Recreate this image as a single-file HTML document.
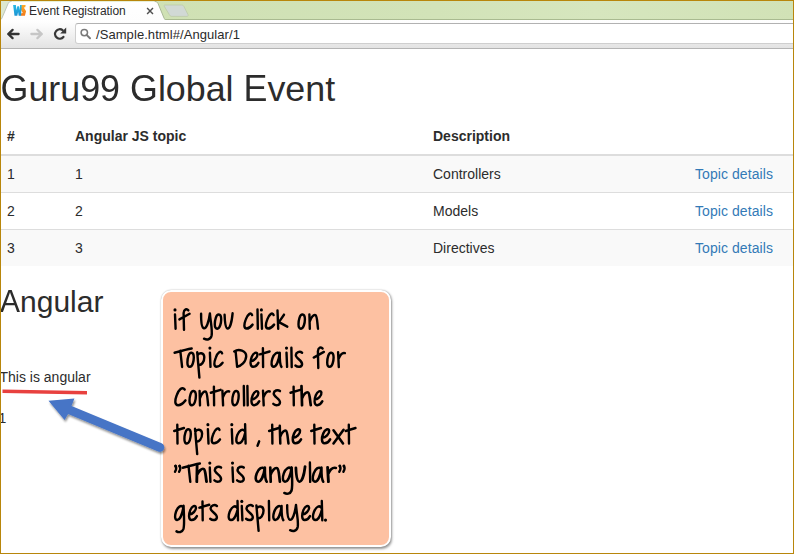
<!DOCTYPE html>
<html>
<head>
<meta charset="utf-8">
<title>Event Registration</title>
<style>
html,body{margin:0;padding:0;}
body{width:794px;height:554px;overflow:hidden;background:#fff;font-family:"Liberation Sans",sans-serif;color:#333;position:relative;}
#frame{position:absolute;left:0;top:0;width:792px;height:552px;border:1px solid #b8860b;overflow:hidden;background:#fff;}
#tabstrip{position:absolute;left:0;top:0;width:792px;height:18px;background:linear-gradient(90deg,#cee0b2,#d2e3b8 55%,#d6e6be 75%,#d1e2b6);border-bottom:1px solid #a9ba90;}
#toolbar{position:absolute;left:0;top:19px;width:792px;height:28px;background:linear-gradient(#ffffff,#fbfbfb 20%,#efefef 60%,#e3e3e3);border-bottom:1px solid #b4b4b4;}
#urlbox{position:absolute;left:74px;top:3px;width:720px;height:19px;background:#fff;border:1px solid #cfcfcf;border-top-color:#b2b2b2;border-radius:3px;}
#url{position:absolute;left:95px;top:25.5px;font-size:13px;letter-spacing:0.07px;color:#2b2b2b;line-height:16px;}
#tabtitle{position:absolute;left:28px;top:2.5px;font-size:12px;letter-spacing:-0.08px;color:#2b2b2b;line-height:14px;}
h1{position:absolute;left:-0.5px;top:67.8px;margin:0;font-size:35.85px;font-weight:normal;line-height:40px;color:#2c2c2c;white-space:nowrap;}
h2{position:absolute;left:-1px;top:283.5px;margin:0;font-size:30px;font-weight:normal;line-height:33px;color:#2c2c2c;}
table{position:absolute;left:-2px;top:117px;width:794px;table-layout:fixed;border-collapse:collapse;font-size:14px;line-height:20px;color:#2c2c2c;}
th{font-weight:bold;text-align:left;padding:7.5px 8px 8.5px;border-bottom:2px solid #ddd;}
td{padding:7.5px 8px 8.5px;border-top:1px solid #ddd;}
tr.odd td{background:#f9f9f9;}
td a{color:#337ab7;text-decoration:none;letter-spacing:0.07px;}
.p{position:absolute;left:-1px;font-size:14px;line-height:20px;color:#2c2c2c;}
#callout{position:absolute;left:160px;top:289px;width:226px;height:252.5px;background:#fdc1a2;border:2px solid #fff;border-radius:10px;box-shadow:0 0 1.2px rgba(0,0,0,.28),1px 1.5px 2.5px rgba(0,0,0,.4);}
h1 .cp{display:inline-block;transform-origin:0 32.4px;transform:scaleY(1.03);}
h2 .cp{display:inline-block;transform-origin:0 26.9px;transform:scaleY(1.02);}
</style>
</head>
<body>
<div id="frame">
  <div id="tabstrip"></div>
  <svg style="position:absolute;left:0;top:0" width="260" height="20" viewBox="0 0 260 20">
    <defs><linearGradient id="tg" x1="0" y1="0" x2="0" y2="1"><stop offset="0" stop-color="#ffffff"/><stop offset="1" stop-color="#fdfdfd"/></linearGradient></defs>
    <path d="M0 0 L12 0 L0 20 Z" fill="#dde8cf"/>
    <path d="M-1.5 19.5 C0 18.8 0.7 17.8 1.4 16 L7 2.8 C7.7 1.2 8.5 0.5 10.5 0.5 L153.7 0.5 C155.7 0.5 156.5 1.2 157.2 2.8 L162.6 16 C163.3 17.8 164 18.8 165.5 19.5 Z" fill="url(#tg)"/>
    <path d="M-1.5 19.5 C0 18.8 0.7 17.8 1.4 16 L7 2.8 C7.7 1.2 8.5 0.5 10.5 0.5" fill="none" stroke="#b9bfb4" stroke-width="0.9"/>
    <path d="M153.7 0.5 C155.7 0.5 156.5 1.2 157.2 2.8 L162.6 16 C163.3 17.8 164 18.8 165.5 19.5" fill="none" stroke="#a9b896" stroke-width="1"/>
    <path d="M164 4 L180.5 4 C182 4 182.6 4.8 183.2 6 L187 13.6 C187.4 14.6 187 15.4 186 15.4 L171 15.4 C169.5 15.4 168.8 14.6 168.2 13.4 L163.2 5.2 C162.9 4.5 163.2 4 164 4 Z" fill="#d1d9d5" stroke="#bccaa8" stroke-width="0.8"/>
    <path d="M146.1 7 L152 12.9 M152 7 L146.1 12.9" stroke="#505050" stroke-width="1.45" fill="none"/>
  </svg>
  <div id="toolbar"><div id="urlbox"></div></div>
  <svg style="position:absolute;left:0;top:19px" width="100" height="28" viewBox="0 0 100 28">
    <path d="M17.6 14 L8 14 M11.6 9.9 L7.2 14 L11.6 18.1" stroke="#333" stroke-width="2.3" fill="none" stroke-linecap="round" stroke-linejoin="round"/>
    <path d="M30.4 14 L40 14 M36.4 9.9 L40.8 14 L36.4 18.1" stroke="#c6c6c6" stroke-width="2.3" fill="none" stroke-linecap="round" stroke-linejoin="round"/>
    <path d="M61.6 10.2 A4.7 4.7 0 1 0 62.4 17" stroke="#383838" stroke-width="2.3" fill="none" stroke-linecap="round"/>
    <path d="M65.2 7.6 L65.2 13.6 L59.2 13.6 Z" fill="#383838"/>
    <circle cx="83.3" cy="12.6" r="3.2" stroke="#7a7a7a" stroke-width="1.5" fill="none"/>
    <path d="M85.8 15.1 L89 18.3" stroke="#7a7a7a" stroke-width="2" stroke-linecap="round"/>
  </svg>
  <svg style="position:absolute;left:11px;top:3px" width="16" height="14" viewBox="12 4 16 14">
    <defs><linearGradient id="fb" x1="0" y1="0" x2="0" y2="1"><stop offset="0" stop-color="#27b9e6"/><stop offset="1" stop-color="#1b93d2"/></linearGradient>
    <linearGradient id="fo" x1="0" y1="0" x2="0" y2="1"><stop offset="0" stop-color="#fbab28"/><stop offset="1" stop-color="#f27a1c"/></linearGradient></defs>
    <path d="M21.3 5.1 L25.6 5.1 L25.3 7.3 L23.8 7.4 L26.1 11.3 L24.9 15.7 L20.6 15.7 L21.2 13.3 L22.8 13.1 L20.8 9.4 Z" fill="url(#fo)"/>
    <path d="M13.1 5 L15.9 5 L16.5 10.2 L17.3 6.2 L19 6.2 L19.6 10.2 L20 5 L21.7 5 L21.1 15.8 L18.7 15.8 L18.1 12 L17.3 15.8 L14.5 15.8 Z" fill="url(#fb)"/>
  </svg>
  <div id="tabtitle">Event Registration</div>
  <div id="url">/Sample.html#/Angular/1</div>

  <h1><span class="cp">G</span>uru<span class="cp">99</span> <span class="cp">G</span>lobal <span class="cp">E</span>vent</h1>
  <table>
    <tr><th style="width:52px">#</th><th style="width:342px">Angular JS topic</th><th style="width:246px">Description</th><th></th></tr>
    <tr class="odd"><td>1</td><td>1</td><td>Controllers</td><td><a>Topic details</a></td></tr>
    <tr><td>2</td><td>2</td><td>Models</td><td><a>Topic details</a></td></tr>
    <tr class="odd"><td>3</td><td>3</td><td>Directives</td><td><a>Topic details</a></td></tr>
  </table>
  <h2><span class="cp">A</span>ngular</h2>
  <div class="p" style="top:366px;left:-1.5px">This is angular</div>
  <div class="p" style="top:406.5px;left:-2.5px">1</div>

  <div id="callout"></div>
  <svg style="position:absolute;left:0;top:380px" width="200" height="90" viewBox="1 381 200 90">
    <defs><filter id="sh" x="-10%" y="-10%" width="120%" height="130%"><feGaussianBlur in="SourceAlpha" stdDeviation="1"/><feOffset dx="0.5" dy="1.5"/><feComponentTransfer><feFuncA type="linear" slope="0.45"/></feComponentTransfer><feMerge><feMergeNode/><feMergeNode in="SourceGraphic"/></feMerge></filter></defs>
    <path d="M2.5 391.2 L87 392.7" stroke="#e8413f" stroke-width="3.5" fill="none"/>
    <g filter="url(#sh)">
    <path d="M48.5 400.8 L74.4 398.5 L71.5 405.9 L161.6 443.3 A4.4 4.4 0 0 1 158.2 451.5 L68.1 414.1 L64.6 420 Z" fill="#4674c6"/>
    </g>
  </svg>





<!--HW-->
<svg id="hw" style="position:absolute;left:-1px;top:-1px" width="794" height="554" viewBox="0 0 794 554">
<g fill="none" stroke="#000" stroke-width="2.4" stroke-linecap="round" stroke-linejoin="round">
<g transform="translate(173.5 330.0) scale(1 1.035)"><path d="M1.5,-15 L2.1,-1.3"/><circle cx="1.5" cy="-19.4" r="1.55" fill="#000" stroke="none"/></g>
<g transform="translate(177.7 330.0) scale(1 1.035)"><path d="M10.6,-19 C9.2,-20.8 6.2,-20.2 5.9,-16.4 L6.3,-0.3 M1.7,-10.3 L11.9,-15.7"/></g>
<g transform="translate(199.7 330.0) scale(1 1.035)"><path d="M1.4,-15.7 C1.3,-8 1.8,-2.2 4.2,-1.6 C6.6,-1.2 9,-7 10.2,-16 C10.8,-8 12.9,0 11.9,5.4 C11,9.4 7.2,9.8 4.3,8.4"/></g>
<g transform="translate(213.5 330.0) scale(1 1.035)"><path d="M5.3,-15 C2.6,-15.2 1.3,-9.4 1.3,-5.6 C1.3,-2.5 2.3,-1.2 3.8,-1.3 C6.4,-1.5 7.7,-6.8 7.7,-10.4 C7.7,-13.6 6.8,-14.9 5.3,-15 Z"/></g>
<g transform="translate(223.3 330.0) scale(1 1.035)"><path d="M1.3,-14.8 C1.5,-8 2.4,-1.6 4.4,-1.4 C6.6,-1.3 8.5,-8 9.3,-16.1"/></g>
<g transform="translate(242.8 330.0) scale(1 1.035)"><path d="M9.3,-14.4 C8.2,-17.6 4.8,-15.2 2.9,-10 C1,-5.2 0.9,-1.5 3.8,-1.4 C6.2,-1.4 8.2,-3.2 9.8,-5.2"/></g>
<g transform="translate(255.9 330.0) scale(1 1.035)"><path d="M1.6,-19.8 L1.9,-1.2"/></g>
<g transform="translate(259.9 330.0) scale(1 1.035)"><path d="M1.5,-15 L2.1,-1.3"/><circle cx="1.5" cy="-19.4" r="1.55" fill="#000" stroke="none"/></g>
<g transform="translate(264.3 330.0) scale(1 1.035)"><path d="M9.3,-14.4 C8.2,-17.6 4.8,-15.2 2.9,-10 C1,-5.2 0.9,-1.5 3.8,-1.4 C6.2,-1.4 8.2,-3.2 9.8,-5.2"/></g>
<g transform="translate(276.0 330.0) scale(1 1.035)"><path d="M1.5,-18.8 L2.2,-1.2 M8,-14.8 L2.9,-7.6 L11.3,-3.2"/></g>
<g transform="translate(297.2 330.0) scale(1 1.035)"><path d="M5.3,-15 C2.6,-15.2 1.3,-9.4 1.3,-5.6 C1.3,-2.5 2.3,-1.2 3.8,-1.3 C6.4,-1.5 7.7,-6.8 7.7,-10.4 C7.7,-13.6 6.8,-14.9 5.3,-15 Z"/></g>
<g transform="translate(308.0 330.0) scale(1 1.035)"><path d="M1.4,-15 L1.8,-1.2 M1.7,-8 C3,-12.2 5.5,-15.2 7.5,-14.4 C9.3,-13.4 9.3,-6 10,-1.3"/></g>
<g transform="translate(173.7 368.2) scale(1 1.035)"><path d="M0.9,-14.9 C5,-16 12,-18 18,-19 M6.6,-16.8 L8.4,-1.2"/></g>
<g transform="translate(186.1 368.2) scale(1 1.035)"><path d="M5.3,-15 C2.6,-15.2 1.3,-9.4 1.3,-5.6 C1.3,-2.5 2.3,-1.2 3.8,-1.3 C6.4,-1.5 7.7,-6.8 7.7,-10.4 C7.7,-13.6 6.8,-14.9 5.3,-15 Z"/></g>
<g transform="translate(195.8 368.2) scale(1 1.035)"><path d="M1.4,-15.4 L3.6,9 M1.7,-12.4 C3,-15.2 8.2,-15.6 8.5,-10.8 C8.7,-6 5.4,-2.4 2.6,-3.2"/></g>
<g transform="translate(208.4 368.2) scale(1 1.035)"><path d="M1.5,-15 L2.1,-1.3"/><circle cx="1.5" cy="-19.4" r="1.55" fill="#000" stroke="none"/></g>
<g transform="translate(212.8 368.2) scale(1 1.035)"><path d="M9.3,-14.4 C8.2,-17.6 4.8,-15.2 2.9,-10 C1,-5.2 0.9,-1.5 3.8,-1.4 C6.2,-1.4 8.2,-3.2 9.8,-5.2"/></g>
<g transform="translate(232.9 368.2) scale(1 1.035)"><path d="M2.7,-16.6 L4.2,-1.4 M1.3,-16.2 C6,-19.2 13.4,-16.8 13.3,-11.5 C13.1,-6 8,-2.2 4.2,-1.4"/></g>
<g transform="translate(249.0 368.2) scale(1 1.035)"><path d="M1.9,-6.8 C5,-7.2 8.9,-10.5 8.4,-13.6 C7.9,-16 4.5,-15.2 2.8,-11 C1,-6.8 1,-1.5 4,-1.4 C6.5,-1.3 8.2,-3 9.4,-5.2"/></g>
<g transform="translate(258.6 368.2) scale(1 1.035)"><path d="M4.3,-19.3 L4.5,-1.2 M1.2,-13.4 L11,-16.2"/></g>
<g transform="translate(270.1 368.2) scale(1 1.035)"><path d="M9.4,-13.6 C7.6,-16.6 4,-14.2 2.3,-9.4 C0.8,-5 1.2,-1.5 3.5,-1.4 C6,-1.4 8.6,-6.4 9.7,-15 C9.6,-8 10,-3 11.4,-1.3"/></g>
<g transform="translate(285.0 368.2) scale(1 1.035)"><path d="M1.5,-15 L2.1,-1.3"/><circle cx="1.5" cy="-19.4" r="1.55" fill="#000" stroke="none"/></g>
<g transform="translate(289.8 368.2) scale(1 1.035)"><path d="M1.6,-19.8 L1.9,-1.2"/></g>
<g transform="translate(294.1 368.2) scale(1 1.035)"><path d="M8,-15 C5.6,-16.8 1.9,-15.4 1.7,-12.6 C1.6,-9.5 8.2,-7.6 8,-4 C7.8,-0.9 3.6,-0.7 1.3,-2.6"/></g>
<g transform="translate(312.0 368.2) scale(1 1.035)"><path d="M10.6,-19 C9.2,-20.8 6.2,-20.2 5.9,-16.4 L6.3,-0.3 M1.7,-10.3 L11.9,-15.7"/></g>
<g transform="translate(325.9 368.2) scale(1 1.035)"><path d="M5.3,-15 C2.6,-15.2 1.3,-9.4 1.3,-5.6 C1.3,-2.5 2.3,-1.2 3.8,-1.3 C6.4,-1.5 7.7,-6.8 7.7,-10.4 C7.7,-13.6 6.8,-14.9 5.3,-15 Z"/></g>
<g transform="translate(336.6 368.2) scale(1 1.035)"><path d="M1.5,-15.3 L2.2,-1.2 M2,-9 C3.5,-12.8 6,-15.2 8.3,-14.6"/></g>
<g transform="translate(173.7 406.6) scale(1 1.035)"><path d="M11,-16.6 C8.5,-19.8 5,-16.4 3,-11 C1,-6 0.8,-1.5 4.5,-1.4 C7.5,-1.4 9.8,-3.6 11.8,-6"/></g>
<g transform="translate(188.2 406.6) scale(1 1.035)"><path d="M5.3,-15 C2.6,-15.2 1.3,-9.4 1.3,-5.6 C1.3,-2.5 2.3,-1.2 3.8,-1.3 C6.4,-1.5 7.7,-6.8 7.7,-10.4 C7.7,-13.6 6.8,-14.9 5.3,-15 Z"/></g>
<g transform="translate(198.2 406.6) scale(1 1.035)"><path d="M1.4,-15 L1.8,-1.2 M1.7,-8 C3,-12.2 5.5,-15.2 7.5,-14.4 C9.3,-13.4 9.3,-6 10,-1.3"/></g>
<g transform="translate(209.6 406.6) scale(1 1.035)"><path d="M4.3,-19.3 L4.5,-1.2 M1.2,-13.4 L11,-16.2"/></g>
<g transform="translate(220.9 406.6) scale(1 1.035)"><path d="M1.5,-15.3 L2.2,-1.2 M2,-9 C3.5,-12.8 6,-15.2 8.3,-14.6"/></g>
<g transform="translate(231.0 406.6) scale(1 1.035)"><path d="M5.3,-15 C2.6,-15.2 1.3,-9.4 1.3,-5.6 C1.3,-2.5 2.3,-1.2 3.8,-1.3 C6.4,-1.5 7.7,-6.8 7.7,-10.4 C7.7,-13.6 6.8,-14.9 5.3,-15 Z"/></g>
<g transform="translate(242.2 406.6) scale(1 1.035)"><path d="M1.6,-19.8 L1.9,-1.2"/></g>
<g transform="translate(245.8 406.6) scale(1 1.035)"><path d="M1.6,-19.8 L1.9,-1.2"/></g>
<g transform="translate(249.9 406.6) scale(1 1.035)"><path d="M1.9,-6.8 C5,-7.2 8.9,-10.5 8.4,-13.6 C7.9,-16 4.5,-15.2 2.8,-11 C1,-6.8 1,-1.5 4,-1.4 C6.5,-1.3 8.2,-3 9.4,-5.2"/></g>
<g transform="translate(261.5 406.6) scale(1 1.035)"><path d="M1.5,-15.3 L2.2,-1.2 M2,-9 C3.5,-12.8 6,-15.2 8.3,-14.6"/></g>
<g transform="translate(272.0 406.6) scale(1 1.035)"><path d="M8,-15 C5.6,-16.8 1.9,-15.4 1.7,-12.6 C1.6,-9.5 8.2,-7.6 8,-4 C7.8,-0.9 3.6,-0.7 1.3,-2.6"/></g>
<g transform="translate(289.3 406.6) scale(1 1.035)"><path d="M4.3,-19.3 L4.5,-1.2 M1.2,-13.4 L11,-16.2"/></g>
<g transform="translate(299.8 406.6) scale(1.12 1.035)"><path d="M1.5,-20 L2,-1.2 M2,-8 C3.5,-12 6,-14.6 7.5,-13.6 C9,-12.5 9,-6 9.8,-1.3"/></g>
<g transform="translate(313.0 406.6) scale(1 1.035)"><path d="M1.9,-6.8 C5,-7.2 8.9,-10.5 8.4,-13.6 C7.9,-16 4.5,-15.2 2.8,-11 C1,-6.8 1,-1.5 4,-1.4 C6.5,-1.3 8.2,-3 9.4,-5.2"/></g>
<g transform="translate(173.0 444.8) scale(1 1.035)"><path d="M4.3,-19.3 L4.5,-1.2 M1.2,-13.4 L11,-16.2"/></g>
<g transform="translate(183.1 444.8) scale(1 1.035)"><path d="M5.3,-15 C2.6,-15.2 1.3,-9.4 1.3,-5.6 C1.3,-2.5 2.3,-1.2 3.8,-1.3 C6.4,-1.5 7.7,-6.8 7.7,-10.4 C7.7,-13.6 6.8,-14.9 5.3,-15 Z"/></g>
<g transform="translate(193.6 444.8) scale(1 1.035)"><path d="M1.4,-15.4 L3.6,9 M1.7,-12.4 C3,-15.2 8.2,-15.6 8.5,-10.8 C8.7,-6 5.4,-2.4 2.6,-3.2"/></g>
<g transform="translate(206.4 444.8) scale(1 1.035)"><path d="M1.5,-15 L2.1,-1.3"/><circle cx="1.5" cy="-19.4" r="1.55" fill="#000" stroke="none"/></g>
<g transform="translate(210.2 444.8) scale(1 1.035)"><path d="M9.3,-14.4 C8.2,-17.6 4.8,-15.2 2.9,-10 C1,-5.2 0.9,-1.5 3.8,-1.4 C6.2,-1.4 8.2,-3.2 9.8,-5.2"/></g>
<g transform="translate(230.3 444.8) scale(1 1.035)"><path d="M1.5,-15 L2.1,-1.3"/><circle cx="1.5" cy="-19.4" r="1.55" fill="#000" stroke="none"/></g>
<g transform="translate(234.8 444.8) scale(1 1.035)"><path d="M10.3,-19.8 L10.8,-1.2 M10.3,-12.8 C8,-16.4 4.5,-14.2 2.5,-9.4 C0.8,-5 1.2,-1.5 3.8,-1.4 C6.5,-1.4 9.1,-6.2 10.4,-11.5"/></g>
<g transform="translate(256.0 444.8) scale(1 1.035)"><path d="M3.2,-3.4 L1.5,0.9"/></g>
<g transform="translate(267.9 444.8) scale(1 1.035)"><path d="M4.3,-19.3 L4.5,-1.2 M1.2,-13.4 L11,-16.2"/></g>
<g transform="translate(278.2 444.8) scale(1.05 1.035)"><path d="M1.5,-18.3 L2,-1.2 M2,-8 C3.5,-12 6,-14.6 7.5,-13.6 C9,-12.5 9,-6 9.8,-1.3"/></g>
<g transform="translate(291.1 444.8) scale(1.06 1.035)"><path d="M1.9,-6.8 C5,-7.2 8.9,-10.5 8.4,-13.6 C7.9,-16 4.5,-15.2 2.8,-11 C1,-6.8 1,-1.5 4,-1.4 C6.5,-1.3 8.2,-3 9.4,-5.2"/></g>
<g transform="translate(310.0 444.8) scale(1 1.035)"><path d="M4.3,-19.3 L4.5,-1.2 M1.2,-13.4 L11,-16.2"/></g>
<g transform="translate(320.3 444.8) scale(1.05 1.035)"><path d="M1.9,-6.8 C5,-7.2 8.9,-10.5 8.4,-13.6 C7.9,-16 4.5,-15.2 2.8,-11 C1,-6.8 1,-1.5 4,-1.4 C6.5,-1.3 8.2,-3 9.4,-5.2"/></g>
<g transform="translate(331.9 444.8) scale(1.06 1.035)"><path d="M1.5,-14 L10.5,-1.3 M11,-14.5 L1.5,-1.3"/></g>
<g transform="translate(344.5 444.8) scale(1 1.035)"><path d="M4.3,-19.3 L4.5,-1.2 M1.2,-13.4 L11,-16.2"/></g>
<g transform="translate(173.7 483.1) scale(1 1.035)"><path d="M1.9,-16.6 C2.9,-14.6 2.5,-12.6 1.3,-11 M6,-16.6 C7,-14.6 6.6,-12.6 5.4,-11"/><circle cx="1.7" cy="-16.5" r="1.35" fill="#000" stroke="none"/><circle cx="5.8" cy="-16.5" r="1.35" fill="#000" stroke="none"/></g>
<g transform="translate(181.9 483.1) scale(1 1.035)"><path d="M0.9,-14.9 C5,-16 12,-18 18,-19 M6.6,-16.8 L8.4,-1.2"/></g>
<g transform="translate(195.0 483.1) scale(1.18 1.035)"><path d="M1.8,-17.6 L1.5,-1.2 M1.7,-8 C3.2,-12 6,-14.6 7.5,-13.6 C9,-12.5 9,-6 9.8,-1.3"/></g>
<g transform="translate(208.3 483.1) scale(1 1.035)"><path d="M1.5,-15 L2.1,-1.3"/><circle cx="1.5" cy="-19.4" r="1.55" fill="#000" stroke="none"/></g>
<g transform="translate(213.1 483.1) scale(1 1.035)"><path d="M8,-15 C5.6,-16.8 1.9,-15.4 1.7,-12.6 C1.6,-9.5 8.2,-7.6 8,-4 C7.8,-0.9 3.6,-0.7 1.3,-2.6"/></g>
<g transform="translate(231.0 483.1) scale(1 1.035)"><path d="M1.5,-15 L2.1,-1.3"/><circle cx="1.5" cy="-19.4" r="1.55" fill="#000" stroke="none"/></g>
<g transform="translate(235.8 483.1) scale(1 1.035)"><path d="M8,-15 C5.6,-16.8 1.9,-15.4 1.7,-12.6 C1.6,-9.5 8.2,-7.6 8,-4 C7.8,-0.9 3.6,-0.7 1.3,-2.6"/></g>
<g transform="translate(254.2 483.1) scale(1.1 1.035)"><path d="M9.4,-13.6 C7.6,-16.6 4,-14.2 2.3,-9.4 C0.8,-5 1.2,-1.5 3.5,-1.4 C6,-1.4 8.6,-6.4 9.7,-15 C9.6,-8 10,-3 11.4,-1.3"/></g>
<g transform="translate(268.7 483.1) scale(1.12 1.035)"><path d="M1.4,-15 L1.8,-1.2 M1.7,-8 C3,-12.2 5.5,-15.2 7.5,-14.4 C9.3,-13.4 9.3,-6 10,-1.3"/></g>
<g transform="translate(281.4 483.1) scale(1.04 1.035)"><path d="M9.5,-13.6 C7.5,-16.5 4,-14.2 2.3,-9.4 C0.8,-5 1.2,-1.5 3.5,-1.4 C6,-1.4 8.6,-6.4 9.9,-15.2 C10.1,-6 11.1,3 9.7,7.4 C8.5,10.6 5,10.8 2.8,9.5"/></g>
<g transform="translate(294.4 483.1) scale(1.15 1.035)"><path d="M1.3,-14.8 C1.5,-8 2.4,-1.6 4.4,-1.4 C6.6,-1.3 8.5,-8 9.3,-16.1"/></g>
<g transform="translate(308.3 483.1) scale(1 1.035)"><path d="M1.6,-19.8 L1.9,-1.2"/></g>
<g transform="translate(311.3 483.1) scale(1.05 1.035)"><path d="M9.4,-13.6 C7.6,-16.6 4,-14.2 2.3,-9.4 C0.8,-5 1.2,-1.5 3.5,-1.4 C6,-1.4 8.6,-6.4 9.7,-15 C9.6,-8 10,-3 11.4,-1.3"/></g>
<g transform="translate(325.8 483.1) scale(1.2 1.035)"><path d="M1.5,-15.3 L2.2,-1.2 M2,-9 C3.5,-12.8 6,-15.2 8.3,-14.6"/></g>
<g transform="translate(338.0 483.1) scale(1 1.035)"><path d="M1.9,-16.6 C2.9,-14.6 2.5,-12.6 1.3,-11 M6,-16.6 C7,-14.6 6.6,-12.6 5.4,-11"/><circle cx="1.7" cy="-16.5" r="1.35" fill="#000" stroke="none"/><circle cx="5.8" cy="-16.5" r="1.35" fill="#000" stroke="none"/></g>
<g transform="translate(173.7 521.5) scale(1 1.035)"><path d="M9.5,-13.6 C7.5,-16.5 4,-14.2 2.3,-9.4 C0.8,-5 1.2,-1.5 3.5,-1.4 C6,-1.4 8.6,-6.4 9.9,-15.2 C10.1,-6 11.1,3 9.7,7.4 C8.5,10.6 5,10.8 2.8,9.5"/></g>
<g transform="translate(187.5 521.5) scale(1 1.035)"><path d="M1.9,-6.8 C5,-7.2 8.9,-10.5 8.4,-13.6 C7.9,-16 4.5,-15.2 2.8,-11 C1,-6.8 1,-1.5 4,-1.4 C6.5,-1.3 8.2,-3 9.4,-5.2"/></g>
<g transform="translate(198.2 521.5) scale(1 1.035)"><path d="M4.3,-19.3 L4.5,-1.2 M1.2,-13.4 L11,-16.2"/></g>
<g transform="translate(208.9 521.5) scale(1 1.035)"><path d="M8,-15 C5.6,-16.8 1.9,-15.4 1.7,-12.6 C1.6,-9.5 8.2,-7.6 8,-4 C7.8,-0.9 3.6,-0.7 1.3,-2.6"/></g>
<g transform="translate(227.2 521.5) scale(1 1.035)"><path d="M10.3,-19.8 L10.8,-1.2 M10.3,-12.8 C8,-16.4 4.5,-14.2 2.5,-9.4 C0.8,-5 1.2,-1.5 3.8,-1.4 C6.5,-1.4 9.1,-6.2 10.4,-11.5"/></g>
<g transform="translate(240.3 521.5) scale(1 1.035)"><path d="M1.5,-15 L2.1,-1.3"/><circle cx="1.5" cy="-19.4" r="1.55" fill="#000" stroke="none"/></g>
<g transform="translate(244.8 521.5) scale(1 1.035)"><path d="M8,-15 C5.6,-16.8 1.9,-15.4 1.7,-12.6 C1.6,-9.5 8.2,-7.6 8,-4 C7.8,-0.9 3.6,-0.7 1.3,-2.6"/></g>
<g transform="translate(255.0 521.5) scale(1 1.035)"><path d="M1.4,-15.4 L3.6,9 M1.7,-12.4 C3,-15.2 8.2,-15.6 8.5,-10.8 C8.7,-6 5.4,-2.4 2.6,-3.2"/></g>
<g transform="translate(267.3 521.5) scale(1 1.035)"><path d="M1.6,-19.8 L1.9,-1.2"/></g>
<g transform="translate(271.9 521.5) scale(1 1.035)"><path d="M9.4,-13.6 C7.6,-16.6 4,-14.2 2.3,-9.4 C0.8,-5 1.2,-1.5 3.5,-1.4 C6,-1.4 8.6,-6.4 9.7,-15 C9.6,-8 10,-3 11.4,-1.3"/></g>
<g transform="translate(285.8 521.5) scale(1 1.035)"><path d="M1.4,-15.7 C1.3,-8 1.8,-2.2 4.2,-1.6 C6.6,-1.2 9,-7 10.2,-16 C10.8,-8 12.9,0 11.9,5.4 C11,9.4 7.2,9.8 4.3,8.4"/></g>
<g transform="translate(300.6 521.5) scale(1 1.035)"><path d="M1.9,-6.8 C5,-7.2 8.9,-10.5 8.4,-13.6 C7.9,-16 4.5,-15.2 2.8,-11 C1,-6.8 1,-1.5 4,-1.4 C6.5,-1.3 8.2,-3 9.4,-5.2"/></g>
<g transform="translate(311.5 521.5) scale(1 1.035)"><path d="M10.3,-19.8 L10.8,-1.2 M10.3,-12.8 C8,-16.4 4.5,-14.2 2.5,-9.4 C0.8,-5 1.2,-1.5 3.8,-1.4 C6.5,-1.4 9.1,-6.2 10.4,-11.5"/></g>
<g transform="translate(324.0 521.5) scale(1 1.035)"><circle cx="1.5" cy="-1.4" r="1.6" fill="#000" stroke="none"/></g>
</g></svg>
<!--/HW-->
</div>
</body>
</html>
